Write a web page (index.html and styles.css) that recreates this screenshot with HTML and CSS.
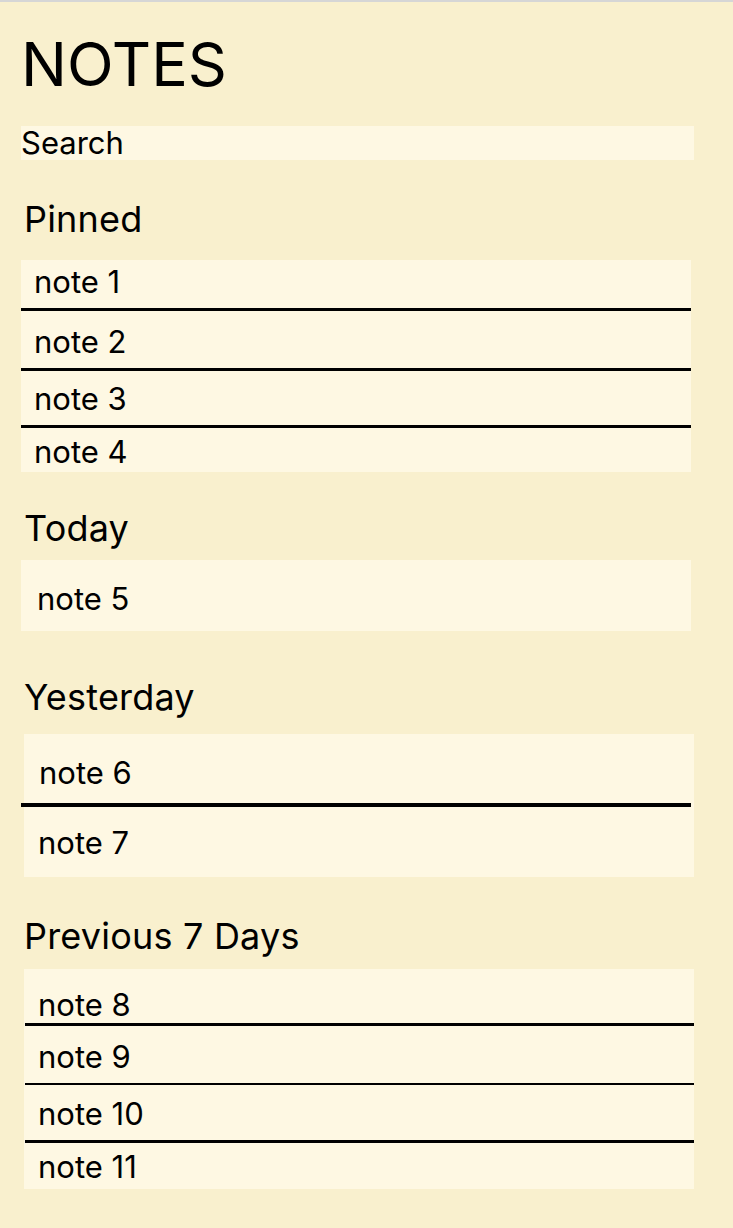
FILE: index.html
```html
<!DOCTYPE html>
<html lang="en">
<head>
<meta charset="utf-8">
<title>Notes</title>
<link rel="stylesheet" href="styles.css">
</head>
<body>
<main class="notes">
  <h1 class="notes-title">NOTES</h1>
  <input class="search" type="text" placeholder="Search">

  <section class="group group-pinned">
    <h2 class="group-title">Pinned</h2>
    <div class="card">
      <div class="note p1">note 1</div>
      <div class="divider"></div>
      <div class="note p2">note 2</div>
      <div class="divider"></div>
      <div class="note p3">note 3</div>
      <div class="divider"></div>
      <div class="note p4">note 4</div>
    </div>
  </section>

  <section class="group group-today">
    <h2 class="group-title">Today</h2>
    <div class="card">
      <div class="note t1">note 5</div>
    </div>
  </section>

  <section class="group group-yesterday">
    <h2 class="group-title">Yesterday</h2>
    <div class="card card-shift">
      <div class="note y1">note 6</div>
      <div class="divider divider-wide"></div>
      <div class="note y2">note 7</div>
    </div>
  </section>

  <section class="group group-prev">
    <h2 class="group-title">Previous 7 Days</h2>
    <div class="card card-shift">
      <div class="note w1">note 8</div>
      <div class="divider divider-in"></div>
      <div class="note w2">note 9</div>
      <div class="divider divider-in thin"></div>
      <div class="note w3">note 10</div>
      <div class="divider divider-in"></div>
      <div class="note w4">note 11</div>
    </div>
  </section>
</main>
</body>
</html>
```

FILE: styles.css
```css
* { box-sizing: border-box; }

html, body {
  margin: 0;
  padding: 0;
}

body {
  background: #f9f0ce;
  border-top: 2px solid #d6d6d6;
  font-family: Inter, "Noto Sans", "Liberation Sans", sans-serif;
  color: #000;
  min-height: 1228px;
}

.notes {
  padding: 0 0 0 21px;
  width: 694px;
}

.notes-title {
  margin: 30px 0 0 0;
  font-size: 61px;
  line-height: 64px;
  font-weight: 400;
}

.search {
  display: block;
  margin: 30px 0 0 0;
  width: 673px;
  height: 34px;
  padding: 0 0 2px 0;
  border: none;
  outline: none;
  background: #fef8e3;
  font-family: inherit;
  font-size: 31px;
  line-height: 32px;
  color: #000;
}
.search::placeholder { color: #000; opacity: 1; }

.group-title {
  margin: 0;
  padding-left: 3px;
  font-size: 36px;
  line-height: 40px;
  font-weight: 400;
  letter-spacing: 0.2px;
}

.group-pinned { margin-top: 39px; }
.group-pinned .group-title { margin-bottom: 21px; }
.group-today { margin-top: 36px; }
.group-today .group-title { margin-bottom: 12px; }
.group-yesterday { margin-top: 46px; }
.group-yesterday .group-title { margin-bottom: 17px; }
.group-prev { margin-top: 39px; }
.group-prev .group-title { margin-bottom: 13px; }

.card {
  width: 670px;
  background: #fef8e3;
}
.card-shift { margin-left: 3px; }

.note {
  font-size: 31px;
  line-height: 36px;
  padding-left: 13px;
}

.divider {
  height: 3px;
  background: #000;
}
.divider-wide {
  height: 4px;
  margin-left: -3px;
  margin-right: 3px;
}
.divider-in { margin-left: 1px; }
.divider-in.thin { height: 2px; }

.p1 { height: 48px; padding-top: 4px; }
.p2 { height: 57px; padding-top: 13px; }
.p3 { height: 54px; padding-top: 10px; }
.p4 { height: 44px; padding-top: 6px; }

.t1 { height: 71px; padding-top: 21px; padding-left: 16px; }

.y1 { height: 69px; padding-top: 21px; padding-left: 15px; }
.y2 { height: 70px; padding-top: 18px; padding-left: 14px; }

.w1 { height: 54px; padding-top: 18px; padding-left: 14px; }
.w2 { height: 57px; padding-top: 13px; padding-left: 14px; }
.w3 { height: 55px; padding-top: 11px; padding-left: 14px; }
.w4 { height: 46px; padding-top: 6px; padding-left: 14px; }
```
